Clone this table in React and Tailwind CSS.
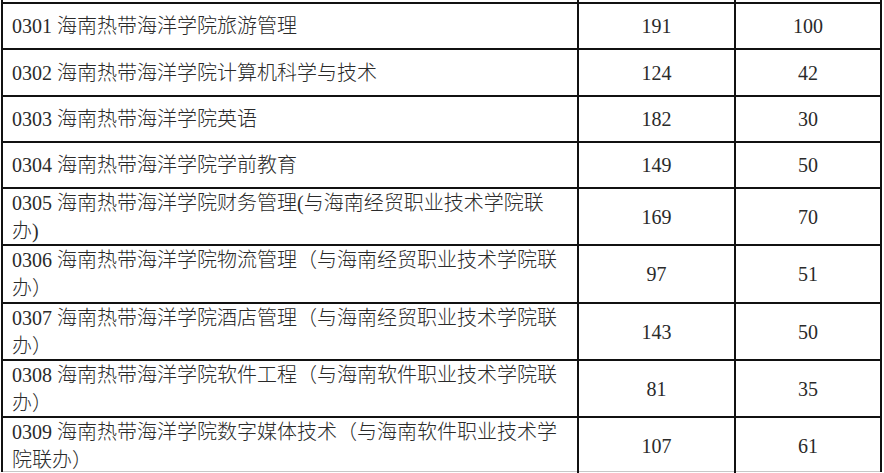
import React from "react";

const rows = [
  { lines: ["0301 海南热带海洋学院旅游管理"], a: "191", b: "100", h: "h-[46px] border-b-2 border-[#111]" },
  { lines: ["0302 海南热带海洋学院计算机科学与技术"], a: "124", b: "42", h: "h-[47px] border-b-2 border-[#111]" },
  { lines: ["0303 海南热带海洋学院英语"], a: "182", b: "30", h: "h-[46px] border-b-2 border-[#111]" },
  { lines: ["0304 海南热带海洋学院学前教育"], a: "149", b: "50", h: "h-[46px] border-b-2 border-[#111]" },
  { lines: ["0305 海南热带海洋学院财务管理(与海南经贸职业技术学院联", "办)"], a: "169", b: "70", h: "h-[57px] border-b-2 border-[#111]" },
  { lines: ["0306 海南热带海洋学院物流管理（与海南经贸职业技术学院联", "办）"], a: "97", b: "51", h: "h-[58px] border-b-2 border-[#111]" },
  { lines: ["0307 海南热带海洋学院酒店管理（与海南经贸职业技术学院联", "办）"], a: "143", b: "50", h: "h-[57px] border-b-2 border-[#111]" },
  { lines: ["0308 海南热带海洋学院软件工程（与海南软件职业技术学院联", "办）"], a: "81", b: "35", h: "h-[57px] border-b-2 border-[#111]" },
  { lines: ["0309 海南热带海洋学院数字媒体技术（与海南软件职业技术学", "院联办）"], a: "107", b: "61", h: "h-[54px] border-b border-[#c8c8c8]" },
];

export default function App() {
  return (
    <div className="w-[884px] h-[473px] bg-white overflow-hidden text-[#2a2a2a] font-light font-['Liberation_Serif','Noto_Sans_CJK_SC',serif] text-[20px]">
      <div className="ml-[1px] w-[881px] border-x-2 border-[#111]">
        <div className="h-[4px] grid grid-cols-[576px_157px_1fr] border-b-2 border-[#111]">
          <div className="border-r-2 border-[#111]" />
          <div className="border-r-2 border-[#111]" />
          <div />
        </div>
        {rows.map((r, i) => (
          <div key={i} className={"grid grid-cols-[576px_157px_1fr] " + r.h}>
            <div className="flex flex-col justify-center pl-[9px] border-r-2 border-[#111] leading-[28px]">
              {r.lines.map((l, j) => (
                <div key={j} className="whitespace-nowrap">{l}</div>
              ))}
            </div>
            <div className="flex items-center justify-center border-r-2 border-[#111]">{r.a}</div>
            <div className="flex items-center justify-center">{r.b}</div>
          </div>
        ))}
      </div>
    </div>
  );
}
